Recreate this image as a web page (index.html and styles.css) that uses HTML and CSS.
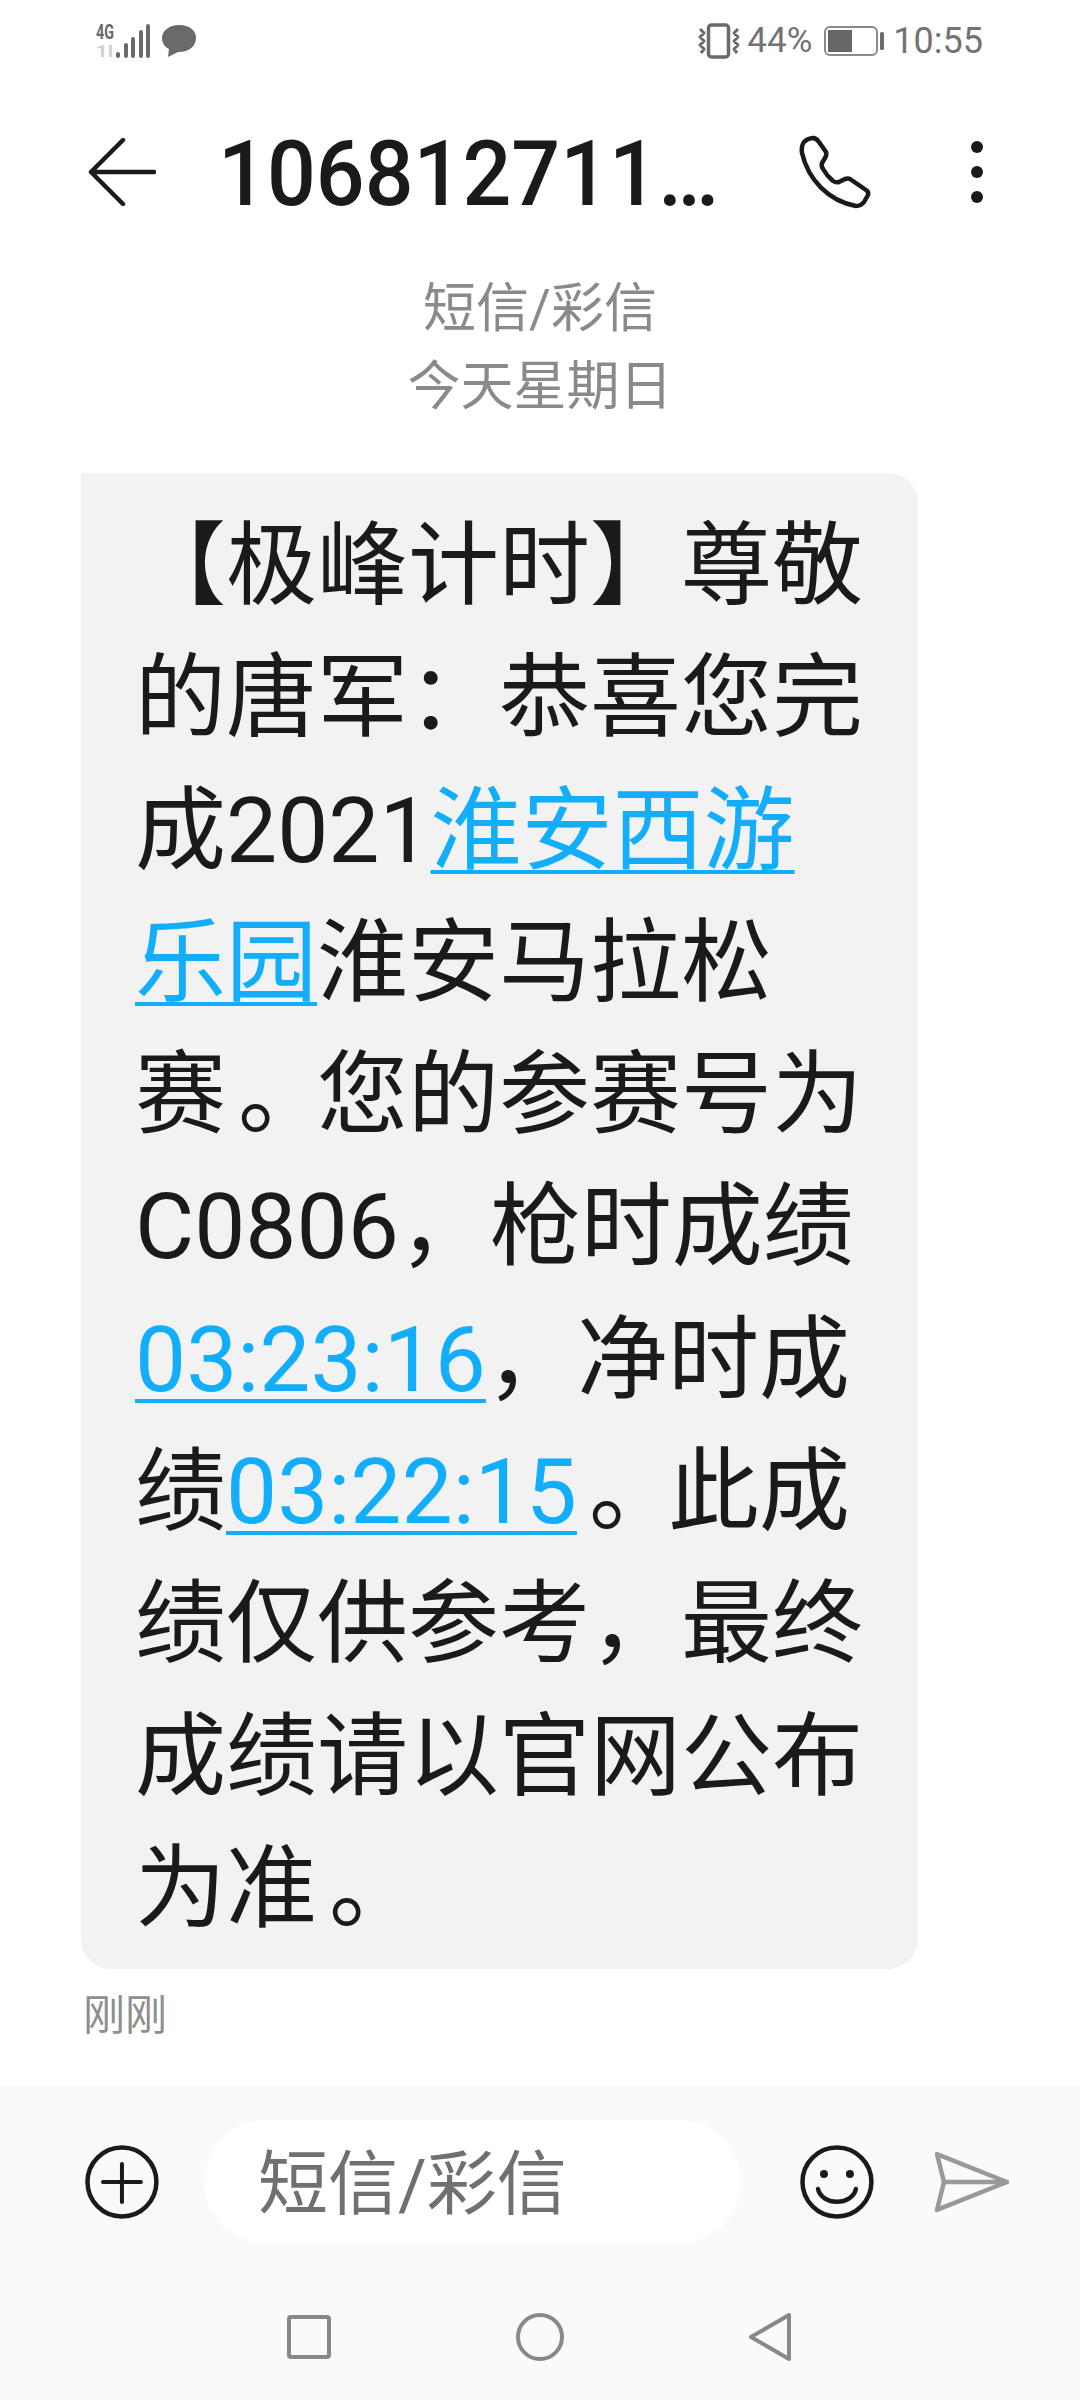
FILE: index.html
```html
<!DOCTYPE html>
<html lang="zh">
<head>
<meta charset="utf-8">
<title>短信</title>
<link rel="stylesheet" href="styles.css">
</head>
<body>
<div class="screen">
  <div class="statusbar">
    <div class="status-left">
      <svg class="ic-signal" width="54" height="36" viewBox="0 0 54 36">
        <text x="0" y="16" class="net" textLength="18" lengthAdjust="spacingAndGlyphs">4G</text>
        <text x="0" y="34" class="net net2" textLength="17" lengthAdjust="spacingAndGlyphs">1l</text>
        <g fill="none" stroke="#6a6a6a" stroke-width="4" stroke-linecap="round">
          <path d="M22 31v2M30 22v11M37 16v17M45 9v24M52 3v30"/>
        </g>
      </svg>
      <svg class="ic-msg" width="36" height="34" viewBox="0 0 36 34">
        <path fill="#6a6a6a" d="M18 1C8 1 1 7 1 14c0 5 3 9 7 11l-1 8 10-5h1c10 0 17-6 17-14S28 1 18 1z"/>
      </svg>
    </div>
    <div class="status-right">
      <svg width="44" height="36" viewBox="0 0 44 36" fill="none" stroke="#6a6a6a">
        <rect x="11.5" y="2" width="20" height="32" rx="3" stroke-width="3.5"/>
        <path stroke-width="3" stroke-linejoin="round" d="M3 6l4 4-4 4 4 4-4 4 4 4-3 4M41 6l-4 4 4 4-4 4 4 4-4 4 3 4"/>
      </svg>
      <span class="pct">44%</span>
      <svg width="60" height="30" viewBox="0 0 60 30">
        <rect x="1" y="1" width="52" height="28" rx="5" fill="none" stroke="#8a8a8a" stroke-width="2"/>
        <rect x="4" y="4" width="24" height="22" fill="#666"/>
        <rect x="56" y="6" width="4" height="18" rx="1.5" fill="#6a6a6a"/>
      </svg>
      <span class="clock">10:55</span>
    </div>
  </div>

  <header class="topbar">
    <svg class="ic-back" width="68" height="68" viewBox="0 0 68 68" fill="none" stroke="#1a1a1a" stroke-width="4.5" stroke-linecap="round" stroke-linejoin="round">
      <path d="M35 2L3 34l32 32M3 34h63"/>
    </svg>
    <h1 class="title">106812711…</h1>
    <svg class="ic-phone" width="74" height="76" viewBox="8 5 74 76" fill="none" stroke="#1a1a1a" stroke-width="4.5" stroke-linejoin="round">
      <path d="M14 13Q18 9 24 9Q27 10 29 13L36 23Q37 26 35 29L32 34Q31 37 33 40Q37 47 43 52Q46 54 49 53L55 50Q58 49 60 50L76 61Q79 63 78 66L74 73Q71 77 66 77C38 72 18 50 12 24Q11 17 14 13Z"/>
    </svg>
    <svg class="ic-menu" width="14" height="64" viewBox="0 0 14 64" fill="#1a1a1a">
      <circle cx="7" cy="7" r="6"/><circle cx="7" cy="32" r="6"/><circle cx="7" cy="57" r="6"/>
    </svg>
  </header>

  <div class="thread-info">
    <div>短信/彩信</div>
    <div>今天星期日</div>
  </div>

  <div class="bubble">
    <p class="msg">【极峰计时】尊敬的唐军：恭喜您完成2021<a class="link">淮安西游乐园</a>淮安马拉松赛<span class="dot">。</span>您的参赛号为C0806，枪时成绩<a class="link">03:23:16</a>，净时成绩<a class="link">03:22:15</a><span class="dot">。</span>此成绩仅供参考，最终成绩请以官网公布为准<span class="dot">。</span></p>
  </div>
  <div class="stamp">刚刚</div>

  <div class="bottom">
    <div class="composer">
      <svg class="ic-plus" width="74" height="74" viewBox="0 0 74 74" fill="none" stroke="#1a1a1a">
        <circle cx="37" cy="37" r="34.5" stroke-width="4.5"/>
        <path stroke-width="4" stroke-linecap="round" d="M37 19v38M18 37h38"/>
      </svg>
      <div class="field">短信/彩信</div>
      <svg class="ic-smile" width="74" height="74" viewBox="0 0 74 74" fill="none" stroke="#1a1a1a">
        <circle cx="37" cy="37" r="34.5" stroke-width="4.5"/>
        <circle cx="24" cy="29" r="4" fill="#1a1a1a" stroke="none"/>
        <circle cx="50" cy="29" r="4" fill="#1a1a1a" stroke="none"/>
        <path stroke-width="4.5" stroke-linecap="round" d="M18 44c4 17 34 17 38 0"/>
      </svg>
      <svg class="ic-send" width="76" height="62" viewBox="0 0 76 62" fill="none" stroke="#999" stroke-width="4.5" stroke-linejoin="round" stroke-linecap="round">
        <path d="M3 3l70 28L3 59l7-28z"/><path d="M10 31h63"/>
      </svg>
    </div>
    <nav class="navbar">
      <svg width="44" height="44" viewBox="0 0 44 44" fill="none" stroke="#888" stroke-width="4"><rect x="2" y="2" width="40" height="40" rx="2"/></svg>
      <svg width="48" height="48" viewBox="0 0 48 48" fill="none" stroke="#888" stroke-width="4"><circle cx="24" cy="24" r="22"/></svg>
      <svg width="44" height="50" viewBox="0 0 44 50" fill="none" stroke="#888" stroke-width="4" stroke-linejoin="round"><path d="M41 3L3 25l38 22z"/></svg>
    </nav>
  </div>
</div>
</body>
</html>
```
FILE: styles.css
```css
* { box-sizing: border-box; }
html, body { margin: 0; padding: 0; background: #fff; }
body { font-family: Roboto, "Noto Sans CJK SC", sans-serif; }
.screen { width: 1080px; height: 2400px; display: flex; flex-direction: column; overflow: hidden; }
.statusbar { height: 78px; padding: 3px 97px 0 96px; display: flex; justify-content: space-between; align-items: center; color: #737373; }
.status-left, .status-right { display: flex; align-items: center; }
.ic-signal { overflow: visible; }
.ic-msg { margin-left: 11px; }
.net { font-family: Roboto, sans-serif; font-size: 21px; font-weight: 700; fill: #6a6a6a; }
.net2 { font-size: 16px; fill: #cfcfcf; }
.pct { font-size: 35px; margin: 0 12px 0 6px; }
.clock { font-size: 36px; margin-left: 9px; }
.topbar { height: 188px; display: flex; align-items: center; padding: 0 96px 0 88px; }
.title { flex: 1; margin: 6px 0 0 62px; font-size: 86px; font-weight: 500; color: #1a1a1a; line-height: 1; white-space: nowrap; transform: scaleY(1.05); }
.ic-menu { margin-left: 98px; }
.thread-info { padding-top: 4px; text-align: center; font-size: 53px; line-height: 78px; color: #8a8a8a; }
.bubble { width: 837px; margin: 47px 0 0 81px; padding: 27px 50px 14px 54px; background: #f2f2f2; border-radius: 2px 30px 30px 30px; }
.msg { margin: 0; font-size: 91px; line-height: 132.3px; color: #1a1a1a; word-break: break-all; }
.dot { padding-left: 12px; margin-right: -12px; }
.link { color: #12aefc; text-decoration: underline; text-decoration-thickness: 4px; text-underline-offset: 8px; }
.stamp { margin: 22px 0 0 83px; font-size: 42px; line-height: 50px; color: #8e8e8e; }
.bottom { margin-top: auto; height: 314px; background: #fafafa; display: flex; flex-direction: column; }
.composer { display: flex; align-items: center; padding: 34px 70px 0 85px; }
.field { width: 538px; height: 123px; margin: 0 59px 0 45px; padding-left: 54px; background: #fff; border-radius: 62px; font-size: 70px; line-height: 130px; color: #707070; }
.ic-send { margin-left: 60px; }
.navbar { display: flex; align-items: center; justify-content: space-between; width: 505px; margin: 69px 0 0 287px; }
```
